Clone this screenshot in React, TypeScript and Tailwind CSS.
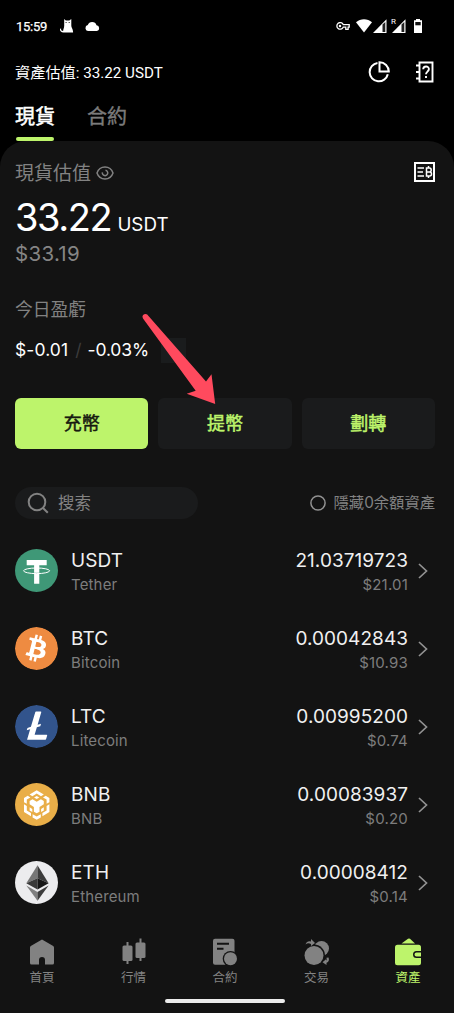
import React from "react"
import { SiBitcoin, SiLitecoin } from "react-icons/si"

interface IAsset {
    symbol: string
    name: string
    amount: string
    value: string
    icon: React.ReactNode
}

interface INavItem {
    label: string
    icon: React.ReactNode
    active?: boolean
}

const TetherIcon = () => (
    <svg viewBox="0 0 43 43" className="size-[43px]">
        <circle cx="21.5" cy="21.5" r="21.5" fill="#3f9877" />
        <path d="M11.7 11h20v5.2h-7.4v18.6h-5.2V16.2h-7.4z" fill="#fff" />
        <path d="M19.100 24.200q2.600.200 5.200 0" fill="none" stroke="#3f9877" strokeWidth=".8" />
        <ellipse cx="21.6" cy="21.8" rx="13" ry="2.8" fill="none" stroke="#fff" strokeWidth="1" />
    </svg>
)

const BnbIcon = () => (
    <svg viewBox="0 0 43 43" className="size-[43px]">
        <circle cx="21.5" cy="21.5" r="21.5" fill="#e9ae48" />
        <g fill="#fff">
            <path d="M14.600 11.500 21.700 7.300l7.100 4.200-2.800 1.700-4.300-2.600-4.300 2.600z" />
            <path d="M21.700 12.900l2.600 1.500-2.600 1.600-2.600-1.600z" />
            <path d="M9 14.900l3.700-2.200 2.700 1.700-3.600 2.200v4.200L9 19.200z" />
            <path d="M34.400 14.900l-3.700-2.200-2.700 1.700 3.600 2.200v4.200l2.800-1.600z" />
            <path d="M14.600 18l2.900-1.700 4.200 2.500 4.200-2.500 2.900 1.700v3.300l-4.300 2.600v4.800l-2.800 1.600-2.800-1.600v-4.800l-4.300-2.600z" />
            <path d="M9 21.300l2.800 1.700v4.500l4.200 2.500v3.300L9 29.100z" />
            <path d="M34.400 21.300l-2.800 1.700v4.500L27.400 30v3.300l7-4.200z" />
            <path d="M14.600 24.300l2.700 1.600v3.200l-2.700-1.600z" />
            <path d="M28.800 24.300l-2.700 1.600v3.200l2.700-1.600z" />
            <path d="M17.600 31.200l2.800 1.500 1.300.9 1.300-.9 2.800-1.500v3.200l-4.100 2.300-4.100-2.300z" />
        </g>
    </svg>
)

const EthIcon = () => (
    <svg viewBox="0 0 43 43" className="size-[43px]">
        <circle cx="21.5" cy="21.5" r="21.5" fill="#ececee" />
        <path d="M22.5 4.300v13l-11.200 4.900z" fill="#777" />
        <path d="M22.5 4.300v13l11.100 4.900z" fill="#3c3c3c" />
        <path d="M22.5 17.300v11.300l-11.200-6.400z" fill="#3a3a3a" />
        <path d="M22.5 17.300v11.300l11.100-6.400z" fill="#171717" />
        <path d="M22.5 31v8.700L11.300 24.500z" fill="#808080" />
        <path d="M22.5 31v8.700l11.100-15.200z" fill="#3c3c3c" />
    </svg>
)

const StatusBar = () => (
    <div className="flex h-[52px] shrink-0 items-center pl-4 pr-8 font-['Roboto',sans-serif] text-white">
        <span className="text-[13px] leading-none tracking-[-0.25px] [-webkit-text-stroke:0.25px]">15:59</span>
        <svg viewBox="0 0 14 14" className="ml-[13px] h-[14px] w-[14px]" fill="currentColor">
            <path d="M4.200 0l1.600 1.500h3.500L11.300 0v6.200c0 2.600 1.800 3.400 1.800 7.300H3.400C.6 13.200-.6 11.200.3 9.500l.9.200c-.4 1.200.3 2.300 1.900 2.400.1-2.200 1.100-3 1.100-5.400z" />
            <path d="M5.600 3.500h1M8.700 3.500h1" stroke="#000" strokeWidth=".9" />
        </svg>
        <svg viewBox="0 0 15 9" className="ml-[11px] h-[9px] w-[15px]" fill="currentColor">
            <path d="M3 9a3 3 0 0 1-.2-5.900 4.600 4.600 0 0 1 8.700.2A2.900 2.900 0 0 1 12 9z" />
        </svg>
        <svg viewBox="0 0 14 8" className="ml-auto h-2 w-[14px]" fill="none" stroke="currentColor" strokeWidth="1.300">
            <path d="M7.200 2.600h6v2.600h-1.100v2.200H9.800V5.200H7.200A3.300 3.300 0 1 1 7.200 2.600z" />
            <circle cx="4" cy="3.900" r=".6" />
        </svg>
        <svg viewBox="0 0 16 14" className="ml-[6px] h-[14px] w-4" fill="currentColor">
            <path d="M8 13.500L0 3.300C4.500-.9 11.500-.9 16 3.300z" />
        </svg>
        <svg viewBox="0 0 14 14" className="ml-[1px] h-[14px] w-[14px]" fill="currentColor">
            <path d="M0 14L13.500.3V14z" />
            <path d="M9.500 5.500v7.500h2.800V3z" fill="#222" />
        </svg>
        <span className="-mt-[9px] ml-[4px] text-[8px] leading-none">R</span>
        <svg viewBox="0 0 14 14" className="-ml-[4px] h-[14px] w-[14px]" fill="currentColor">
            <path d="M0 14L13.500.3V14z" />
            <path d="M9.500 5.500v7.500h2.800V3z" fill="#222" />
        </svg>
        <svg viewBox="0 0 8 14" className="ml-[8px] h-[14px] w-2" fill="currentColor">
            <path d="M2 0h4v1.200h2V14H0V1.200h2z" />
            <path d="M1.300 3h5.400v3.300H1.300z" fill="#111" />
        </svg>
    </div>
)

const Header = () => (
    <div className="flex h-10 shrink-0 items-center pl-[15px] pr-[20px] text-white">
        <span className="pt-1 font-['Roboto','Noto_Sans_CJK_TC',sans-serif] text-[15.200px] leading-none">資產估值: 33.22 USDT</span>
        <svg viewBox="0 0 22 22" className="ml-auto size-[22px]" fill="none" stroke="currentColor" strokeWidth="2">
            <path d="M9.500 2a9.200 9.200 0 1 0 10.300 11.200" />
            <path d="M11.500 1.200v9.300h9.300A9.300 9.300 0 0 0 11.500 1.200z" />
        </svg>
        <svg viewBox="0 0 18 22" className="ml-[26px] h-[22px] w-[18px]" fill="none" stroke="currentColor" strokeWidth="1.900">
            <path d="M3.500 1.500h13v19h-13z" />
            <path d="M0 4.500h4M0 11h4M0 17.500h4" />
            <path d="M7.200 8.300c0-3.700 5.700-3.700 5.700-.2 0 2.500-2.900 2.600-2.900 5.200M10 15v2" />
        </svg>
    </div>
)

const Tabs = () => (
    <div className="flex h-[49px] shrink-0 gap-8 pl-[15px] pt-3 font-['Noto_Sans_CJK_TC',sans-serif] text-[20px] leading-6">
        <div className="relative text-white [-webkit-text-stroke:0.5px]">
            現貨
            <span className="absolute bottom-0 left-[1px] h-1 w-[38px] rounded-full bg-[#bdf46b]" />
        </div>
        <div className="text-[#7b7b7b] [-webkit-text-stroke:0.4px]">合約</div>
    </div>
)

const Balance = () => (
    <div className="px-[15px] pt-[20px]">
        <div className="flex h-6 items-center text-[#828282]">
            <span className="pt-0.5 text-[19px] leading-6">現貨估值</span>
            <svg viewBox="0 0 18 16" className="ml-[5px] h-4 w-[18px]" fill="none" stroke="currentColor" strokeWidth="1.500">
                <path d="M1 8c1.200-3.500 4.200-6 8-6s6.800 2.500 8 6c-1.200 3.500-4.200 6-8 6S2.200 11.500 1 8z" />
                <path d="M9.500 5.300A2.700 2.700 0 1 1 6.400 7.400" />
            </svg>
            <svg viewBox="0 0 21 20" className="-mt-0.5 ml-auto mr-1 h-5 w-[21px] text-white" fill="none" stroke="currentColor">
                <path d="M1 1h19v18H1z" strokeWidth="2" />
                <path d="M3.500 6h6.500M3.500 10h5.500M3.500 14h6.500" strokeWidth="1.600" />
                <path d="M12.500 6h3q1.700 0 1.700 2t-1.700 2h-3 3.200q1.800 0 1.800 2t-1.800 2h-3.200zM14.500 4v2M14.500 14v2" strokeWidth="1.500" />
            </svg>
        </div>
        <div className="mt-[10px] flex h-11 items-baseline text-white">
            <span className="text-[38px] leading-[44px] tracking-[-1.400px]">33.22</span>
            <span className="ml-[6px] text-[18.800px]">USDT</span>
        </div>
        <div className="mt-[3px] text-[20.500px] leading-6 tracking-[0.300px] text-[#858585]">$33.19</div>
        <div className="mt-[30px] text-[17.800px] leading-7 text-[#828282]">今日盈虧</div>
        <div className="mt-[13px] flex h-[26px] items-center text-[17.500px] text-white">
            <span className="tracking-[0.100px]">$-0.01</span>
            <span className="ml-[7px] mr-[6px] text-[#3c3c3c]">/</span>
            <span className="tracking-[-0.150px]">-0.03%</span>
            <span className="ml-3 h-[25px] w-[25px] bg-[#1a1c1d]" />
        </div>
    </div>
)

const Actions = () => (
    <div className="mt-[35px] grid grid-cols-3 gap-[10px] pl-[15px] pr-[19px] text-[18px] text-[#bdf46b] [-webkit-text-stroke:0.5px]">
        <button className="h-[51px] rounded-md bg-[#bdf46b] text-[#171a10]">充幣</button>
        <button className="h-[51px] rounded-md bg-[#1a1b1c]">提幣</button>
        <button className="h-[51px] rounded-md bg-[#1a1b1c]">劃轉</button>
    </div>
)

const SearchRow = () => (
    <div className="mt-[38px] flex h-8 items-center justify-between pl-[15px] pr-[19px] text-[#828282]">
        <div className="flex h-8 w-[183px] items-center rounded-full bg-[#1a1b1c] pl-3">
            <svg viewBox="0 0 22 22" className="size-[22px]" fill="none" stroke="currentColor" strokeWidth="2">
                <circle cx="10" cy="10" r="8.300" />
                <path d="M15.800 15.800l5 5" />
            </svg>
            <span className="ml-[9px] text-[16.500px] leading-8">搜索</span>
        </div>
        <div className="flex items-center gap-2 text-[15.300px]">
            <svg viewBox="0 0 16 16" className="size-4" fill="none" stroke="#929292" strokeWidth="1.500">
                <circle cx="8" cy="8" r="7.100" />
            </svg>
            <span className="leading-8">隱藏0余額資產</span>
        </div>
    </div>
)

const AssetRow: React.FC<IAsset> = ({ symbol, name, amount, value, icon }) => (
    <div className="flex h-[78px] items-center pl-[15px] pr-[26px]">
        <div className="pb-0.5">{icon}</div>
        <div className="ml-[13px] pt-[3px]">
            <div className="text-[19px] leading-6 tracking-[0.100px] text-[#f0f0f0]">{symbol}</div>
            <div className="text-[15px] leading-6 tracking-[0.150px] text-[#7d7d7d]">{name}</div>
        </div>
        <div className="ml-auto pt-[3px] text-right">
            <div className="text-[19px] leading-6 tracking-[0.050px] text-[#f0f0f0]">{amount}</div>
            <div className="text-[15px] leading-6 tracking-[0.200px] text-[#7d7d7d]">{value}</div>
        </div>
        <svg viewBox="0 0 10 16" className="ml-[10px] h-4 w-[10px]" fill="none" stroke="#929292" strokeWidth="1.700">
            <path d="M1 1l7.500 7L1 15" />
        </svg>
    </div>
)

const assets: IAsset[] = [
    { symbol: "USDT", name: "Tether", amount: "21.03719723", value: "$21.01", icon: <TetherIcon /> },
    {
        symbol: "BTC",
        name: "Bitcoin",
        amount: "0.00042843",
        value: "$10.93",
        icon: <SiBitcoin className="size-[43px] rounded-full bg-[radial-gradient(closest-side,white_85%,transparent_86%)] text-[#ee8b41]" />,
    },
    {
        symbol: "LTC",
        name: "Litecoin",
        amount: "0.00995200",
        value: "$0.74",
        icon: <SiLitecoin className="size-[43px] rounded-full bg-[radial-gradient(closest-side,white_85%,transparent_86%)] text-[#32548c]" />,
    },
    { symbol: "BNB", name: "BNB", amount: "0.00083937", value: "$0.20", icon: <BnbIcon /> },
    { symbol: "ETH", name: "Ethereum", amount: "0.00008412", value: "$0.14", icon: <EthIcon /> },
]

const navItems: INavItem[] = [
    {
        label: "首頁",
        icon: <path d="M14 1.500L25.200 8q.8.500.8 1.500V25q0 1.500-1.500 1.500H17V22a3 3 0 0 0-6 0v4.500H3.500Q2 26.500 2 25V9.500Q2 8.500 2.800 8z" />,
    },
    {
        label: "行情",
        icon: (
            <>
                <rect x="2.500" y="7.500" width="10" height="15.500" rx="1.500" />
                <rect x="15.500" y="4.500" width="10" height="15.500" rx="1.500" />
                <path d="M6.500 4h2v22h-2zM19.500.500h2v22.500h-2z" />
            </>
        ),
    },
    {
        label: "合約",
        icon: (
            <>
                <rect x="2" y=".800" width="21.500" height="26" rx="2" />
                <path d="M6 5.800h12M6 10.800h6.500" stroke="#131313" strokeWidth="1.900" />
                <circle cx="19.500" cy="20.700" r="7.800" fill="#131313" />
                <circle cx="19.500" cy="20.700" r="6.500" />
            </>
        ),
    },
    {
        label: "交易",
        icon: (
            <>
                <circle cx="18.500" cy="10.500" r="7.500" />
                <circle cx="11" cy="17.500" r="11" fill="#131313" />
                <circle cx="11" cy="17.500" r="9.500" />
                <path d="M2.500 6.500Q4 2.500 8 3.500V1l4 4-4 3V6Q5 4.500 2.500 6.500z" />
                <path d="M25.500 19.500q1.500 4-2 5.200V27l-4-2.800 3.500-3v1.500q1.200-1 .5-3z" />
            </>
        ),
    },
    {
        label: "資產",
        active: true,
        icon: (
            <>
                <path d="M7.500 5.500L14 .800q1-.600 2 0l5 4.700z" />
                <rect x="1" y="6.800" width="26" height="20.500" rx="2.500" />
                <path d="M28 13.800h-5.500a2.700 2.700 0 0 0 0 5.500H28" fill="none" stroke="#131313" strokeWidth="1.500" />
            </>
        ),
    },
]

const BottomNav = () => (
    <div className="relative mt-auto h-[91px] shrink-0 pt-4">
        <div className="flex justify-between pl-[22px] pr-[26px]">
            {navItems.map(({ label, icon, active }) => (
                <div key={label} className={`flex w-10 flex-col items-center ${active ? "text-[#bdf46b]" : "text-[#828282]"}`}>
                    <svg viewBox="0 0 28 28" className="size-7" fill="currentColor">
                        {icon}
                    </svg>
                    <span className="text-[12.500px] leading-6">{label}</span>
                </div>
            ))}
        </div>
        <div className="absolute bottom-[10px] left-[165px] h-1 w-[120px] rounded-full bg-[#ececec]" />
    </div>
)

const ArrowMark = () => (
    <svg viewBox="0 0 75 92" className="absolute left-[141px] top-[313px] h-[92px] w-[75px]" fill="#ff4a5e">
        <path d="M2 5.500Q.500 2.500 3.200 1.300T7.500 3L65 68.500l5.500-7.300 3.700 29.800-28.500-10.300 9-2.900z" />
    </svg>
)

const App: React.FC = () => {
    return (
        <div className="relative flex h-[1013px] w-[454px] flex-col overflow-hidden bg-black">
            <StatusBar />
            <Header />
            <Tabs />
            <div className="flex flex-1 flex-col rounded-t-[26px] bg-[#131313] font-['Inter','Noto_Sans_CJK_TC',sans-serif]">
                <Balance />
                <Actions />
                <SearchRow />
                <div className="mt-[13px]">
                    {assets.map((asset) => (
                        <AssetRow key={asset.symbol} {...asset} />
                    ))}
                </div>
                <BottomNav />
            </div>
            <ArrowMark />
        </div>
    )
}

export default App
